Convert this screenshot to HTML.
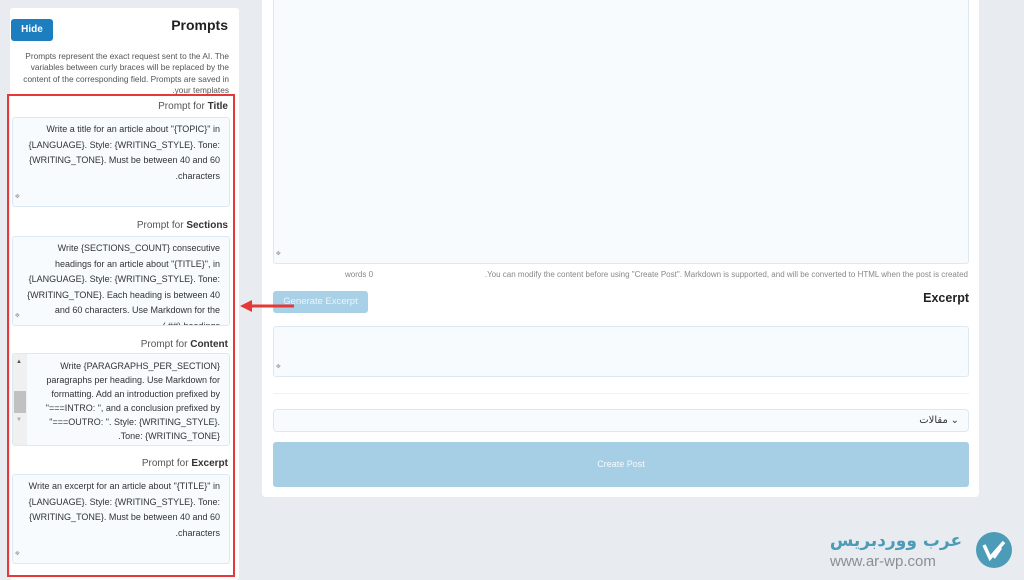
<!DOCTYPE html>
<html><head><meta charset="utf-8"><style>
*{box-sizing:border-box;margin:0;padding:0}
body{width:1024px;height:580px;background:#e8ecf0;font-family:"Liberation Sans",sans-serif;position:relative;overflow:hidden;color:#333}
.abs{position:absolute}
.panel{background:#fff}
.ta{position:absolute;background:#f7fbfe;border:1px solid #dde9f2;border-radius:3px;font-size:9px;line-height:15.5px;color:#333;text-align:right;padding:4px 9px 0 10px;direction:rtl;overflow:hidden}
.lbl{position:absolute;font-size:10px;color:#555;text-align:right}
.lbl b{color:#333}
.grip{position:absolute;left:3px;bottom:2px;font-size:7px;color:#666;transform:rotate(-45deg)}
</style></head><body>
<div class="abs panel" style="left:10px;top:8px;width:229px;height:572px;border-radius:3px"></div>
<div class="abs panel" style="left:262px;top:0;width:717px;height:497px;border-radius:0 0 4px 4px"></div>

<div class="abs" style="left:11px;top:19px;width:42px;height:22px;background:#1d7ebf;border-radius:3px;color:#fff;font-size:10px;font-weight:bold;text-align:center;line-height:22px">Hide</div>
<div class="abs" style="right:796px;top:17px;font-size:14px;font-weight:bold;color:#222">Prompts</div>
<div class="abs" style="left:22px;top:51px;width:207px;font-size:8.3px;line-height:11.3px;color:#555;text-align:right;direction:rtl">Prompts represent the exact request sent to the AI. The variables between curly braces will be replaced by the content of the corresponding field. Prompts are saved in your templates.</div>

<div class="abs" style="left:7px;top:94px;width:228px;height:483px;border:2px solid #e5383b"></div>

<div class="lbl" style="right:796px;top:101px">Prompt for <b>Title</b></div>
<div class="ta" style="left:12px;top:117px;width:218px;height:90px">Write a title for an article about "{TOPIC}" in {LANGUAGE}. Style: {WRITING_STYLE}. Tone: {WRITING_TONE}. Must be between 40 and 60 characters.<span class="grip">≡</span></div>

<div class="lbl" style="right:796px;top:220px">Prompt for <b>Sections</b></div>
<div class="ta" style="left:12px;top:236px;width:218px;height:90px">Write {SECTIONS_COUNT} consecutive headings for an article about "{TITLE}", in {LANGUAGE}. Style: {WRITING_STYLE}. Tone: {WRITING_TONE}. Each heading is between 40 and 60 characters. Use Markdown for the headings (## ).<span class="grip">≡</span></div>

<div class="lbl" style="right:796px;top:339px">Prompt for <b>Content</b></div>
<div class="ta" style="left:12px;top:353px;width:218px;height:93px;padding-left:24px;line-height:14px;padding-top:5px">Write {PARAGRAPHS_PER_SECTION} paragraphs per heading. Use Markdown for formatting. Add an introduction prefixed by "===INTRO: ", and a conclusion prefixed by "===OUTRO: ". Style: {WRITING_STYLE}. Tone: {WRITING_TONE}.</div>
<div class="abs" style="left:13px;top:354px;width:14px;height:91px;background:#f0f0f0"></div>
<div class="abs" style="left:14px;top:391px;width:12px;height:22px;background:#c1c1c1"></div>
<div class="abs" style="left:16px;top:359px;font-size:6px;color:#555">▲</div>
<div class="abs" style="left:16px;top:417px;font-size:6px;color:#aaa">▼</div>

<div class="lbl" style="right:796px;top:458px">Prompt for <b>Excerpt</b></div>
<div class="ta" style="left:12px;top:474px;width:218px;height:90px">Write an excerpt for an article about "{TITLE}" in {LANGUAGE}. Style: {WRITING_STYLE}. Tone: {WRITING_TONE}. Must be between 40 and 60 characters.<span class="grip">≡</span></div>

<div class="ta" style="left:273px;top:-2px;width:696px;height:266px"><span class="grip">≡</span></div>
<div class="abs" style="left:345px;top:270px;font-size:8px;color:#888">words 0</div>
<div class="abs" style="right:56px;top:270px;font-size:8px;color:#888">.You can modify the content before using "Create Post". Markdown is supported, and will be converted to HTML when the post is created</div>
<div class="abs" style="left:273px;top:291px;width:95px;height:22px;background:#a8d0e6;border-radius:3px;color:#eaf5fb;font-size:9.5px;text-align:center;line-height:22px">Generate Excerpt</div>
<div class="abs" style="right:55px;top:291px;font-size:12.5px;font-weight:bold;color:#222">Excerpt</div>
<div class="ta" style="left:273px;top:326px;width:696px;height:51px"><span class="grip">≡</span></div>
<div class="abs" style="left:273px;top:393px;width:696px;height:1px;background:#eef2f5"></div>
<div class="abs" style="left:273px;top:409px;width:696px;height:23px;background:#f7fbfe;border:1px solid #dde9f2;border-radius:4px;font-family:'Liberation Sans','DejaVu Sans',sans-serif;font-size:10px;text-align:right;padding-right:9px;line-height:21px;color:#333">مقالات ⌄</div>
<div class="abs" style="left:273px;top:442px;width:696px;height:45px;background:#a6cfe5;border-radius:3px;color:#f4fafd;font-size:9px;text-align:center;line-height:45px">Create Post</div>

<svg class="abs" style="left:238px;top:298px" width="60" height="16"><line x1="10" y1="8" x2="56" y2="8" stroke="#e53935" stroke-width="3"/><polygon points="2,8 14,2 14,14" fill="#e53935"/></svg>

<svg class="abs" style="left:975px;top:531px" width="38" height="38"><circle cx="19" cy="19" r="18" fill="#4c9cb7"/><path d="M9 14 L15 27 L29 11" stroke="#fff" stroke-width="3.5" fill="none"/><path d="M19 27 L26 17" stroke="#fff" stroke-width="2.5"/></svg>
<div class="abs" style="left:826px;top:529px;width:140px;text-align:center;white-space:nowrap;font-family:'DejaVu Sans',sans-serif;font-size:17px;font-weight:bold;color:#4c9cb7;line-height:24px;direction:rtl">عرب ووردبريس</div>
<div class="abs" style="left:830px;top:553px;font-size:15px;color:#8a8f93">www.ar-wp.com</div>
</body></html>
